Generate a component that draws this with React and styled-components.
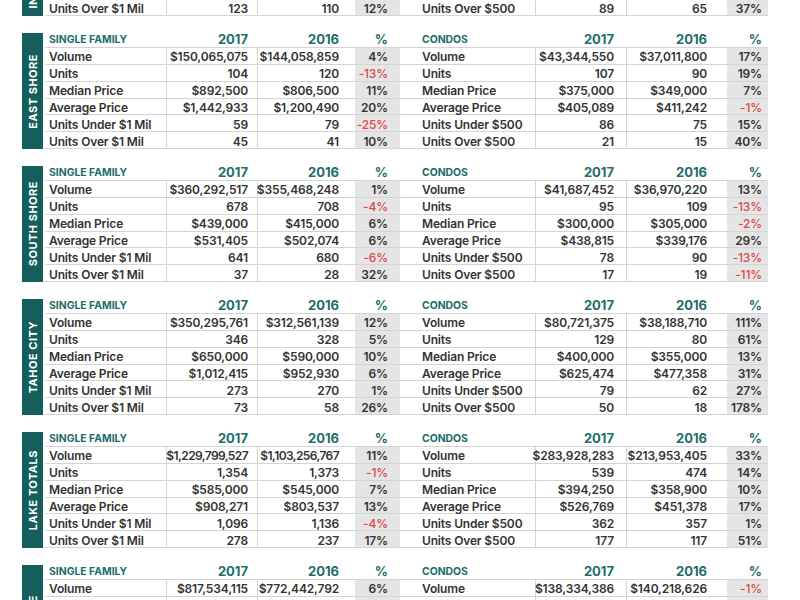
import React from "react";
import styled, { createGlobalStyle } from "styled-components";

const GlobalStyle = createGlobalStyle`
  html, body { margin: 0; padding: 0; background: #fff; }
  body { font-family: Inter, "Open Sans", "DejaVu Sans", sans-serif; color: #333; }
`;

const TEAL = "#145e5c";
const HEAD = "#1d6d69";
const RED = "#e0474c";
const LINE = "#d4d4d4";

const SF_LABELS = ["Volume", "Units", "Median Price", "Average Price", "Units Under $1 Mil", "Units Over $1 Mil"];
const CONDO_LABELS = ["Volume", "Units", "Median Price", "Average Price", "Units Under $500", "Units Over $500"];

const E = ["", "", ""];

const blocks = [
  {
    name: "INCLINE VILLAGE",
    sf: [E, E, E, E, E, ["123", "110", "12%"]],
    condo: [E, E, E, E, E, ["89", "65", "37%"]],
  },
  {
    name: "EAST SHORE",
    sf: [
      ["$150,065,075", "$144,058,859", "4%"],
      ["104", "120", "-13%"],
      ["$892,500", "$806,500", "11%"],
      ["$1,442,933", "$1,200,490", "20%"],
      ["59", "79", "-25%"],
      ["45", "41", "10%"],
    ],
    condo: [
      ["$43,344,550", "$37,011,800", "17%"],
      ["107", "90", "19%"],
      ["$375,000", "$349,000", "7%"],
      ["$405,089", "$411,242", "-1%"],
      ["86", "75", "15%"],
      ["21", "15", "40%"],
    ],
  },
  {
    name: "SOUTH SHORE",
    sf: [
      ["$360,292,517", "$355,468,248", "1%"],
      ["678", "708", "-4%"],
      ["$439,000", "$415,000", "6%"],
      ["$531,405", "$502,074", "6%"],
      ["641", "680", "-6%"],
      ["37", "28", "32%"],
    ],
    condo: [
      ["$41,687,452", "$36,970,220", "13%"],
      ["95", "109", "-13%"],
      ["$300,000", "$305,000", "-2%"],
      ["$438,815", "$339,176", "29%"],
      ["78", "90", "-13%"],
      ["17", "19", "-11%"],
    ],
  },
  {
    name: "TAHOE CITY",
    sf: [
      ["$350,295,761", "$312,561,139", "12%"],
      ["346", "328", "5%"],
      ["$650,000", "$590,000", "10%"],
      ["$1,012,415", "$952,930", "6%"],
      ["273", "270", "1%"],
      ["73", "58", "26%"],
    ],
    condo: [
      ["$80,721,375", "$38,188,710", "111%"],
      ["129", "80", "61%"],
      ["$400,000", "$355,000", "13%"],
      ["$625,474", "$477,358", "31%"],
      ["79", "62", "27%"],
      ["50", "18", "178%"],
    ],
  },
  {
    name: "LAKE TOTALS",
    sf: [
      ["$1,229,799,527", "$1,103,256,767", "11%"],
      ["1,354", "1,373", "-1%"],
      ["$585,000", "$545,000", "7%"],
      ["$908,271", "$803,537", "13%"],
      ["1,096", "1,136", "-4%"],
      ["278", "237", "17%"],
    ],
    condo: [
      ["$283,928,283", "$213,953,405", "33%"],
      ["539", "474", "14%"],
      ["$394,250", "$358,900", "10%"],
      ["$526,769", "$451,378", "17%"],
      ["362", "357", "1%"],
      ["177", "117", "51%"],
    ],
  },
  {
    name: "TRUCKEE",
    sf: [["$817,534,115", "$772,442,792", "6%"], E, E, E, E, E],
    condo: [["$138,334,386", "$140,218,626", "-1%"], E, E, E, E, E],
  },
];

const Page = styled.div`
  width: 800px;
  height: 600px;
  overflow: hidden;
  padding-left: 22px;
  box-sizing: border-box;
`;

const Stack = styled.div`
  display: flex;
  flex-direction: column;
  gap: 17px;
  margin-top: -100px;
`;

const Block = styled.section`
  display: flex;
  gap: 2px;
  height: 116px;
`;

const SideBar = styled.div`
  width: 21px;
  flex: none;
  background: ${TEAL};
  display: flex;
  align-items: center;
  justify-content: center;
  overflow: hidden;
`;

const SideLabel = styled.span`
  writing-mode: vertical-rl;
  transform: rotate(180deg);
  color: #fff;
  font-weight: 700;
  font-size: 11px;
  letter-spacing: 0.5px;
  white-space: nowrap;
`;

const Table = styled.div`
  display: grid;
  grid-template-columns: 121px 91px 98px 45px 135px 91px 101px 41px;
  grid-template-rows: 15px repeat(6, minmax(0, 1fr));
  height: 116px;
`;

const Cell = styled.div`
  display: flex;
  align-items: center;
  border-bottom: 1px solid ${LINE};
  box-sizing: border-box;
  white-space: nowrap;
  font-size: 12px;
  line-height: 13px;
  font-weight: 600;
  letter-spacing: -0.15px;
  padding-top: 2px;
`;

const LabelCell = styled(Cell)`
  padding-left: ${(p) => p.$indent}px;
`;

const NumCell = styled(Cell)`
  justify-content: flex-end;
  padding-right: ${(p) => p.$pad}px;
  border-left: 1px solid ${LINE};
  letter-spacing: ${(p) => (p.$tight ? "-0.6px" : "-0.15px")};
`;

const PctCell = styled(Cell)`
  justify-content: flex-end;
  padding-right: ${(p) => p.$pad}px;
  background: #e5e5e5;
  color: ${(p) => (p.$neg ? RED : "#333")};
  font-weight: ${(p) => (p.$neg ? 500 : 600)};
`;

const HeadCell = styled.div`
  display: flex;
  align-items: flex-end;
  border-bottom: 1px solid ${LINE};
  box-sizing: border-box;
  color: ${HEAD};
  font-weight: 700;
  white-space: nowrap;
  line-height: 1;
`;

const HeadLabel = styled(HeadCell)`
  font-size: 10.4px;
  padding-left: ${(p) => p.$indent}px;
  padding-bottom: 2px;
`;

const HeadNum = styled(HeadCell)`
  justify-content: flex-end;
  font-size: 13px;
  padding-right: ${(p) => p.$pad}px;
  padding-bottom: 1px;
`;

const sides = [
  { key: "sf", title: "SINGLE FAMILY", labels: SF_LABELS, indent: 4, pads: [9, 16, 12] },
  { key: "condo", title: "CONDOS", labels: CONDO_LABELS, indent: 22, pads: [12, 20, 6] },
];

function Section({ block }) {
  const cells = [];
  sides.forEach((s) => {
    cells.push(
      <HeadLabel key={s.key + "h0"} $indent={s.indent}>{s.title}</HeadLabel>,
      <HeadNum key={s.key + "h1"} $pad={s.pads[0]}>2017</HeadNum>,
      <HeadNum key={s.key + "h2"} $pad={s.pads[1]}>2016</HeadNum>,
      <HeadNum key={s.key + "h3"} $pad={s.pads[2]}>%</HeadNum>
    );
  });
  for (let r = 0; r < 6; r++) {
    sides.forEach((s) => {
      const [a, b, pct] = block[s.key][r];
      const tight = a.length > 13;
      cells.push(
        <LabelCell key={s.key + r + "l"} $indent={s.indent}>{s.labels[r]}</LabelCell>,
        <NumCell key={s.key + r + "a"} $pad={s.pads[0]} $tight={tight}>{a}</NumCell>,
        <NumCell key={s.key + r + "b"} $pad={s.pads[1]} $tight={tight}>{b}</NumCell>,
        <PctCell key={s.key + r + "p"} $pad={s.pads[2]} $neg={pct.startsWith("-")}>{pct}</PctCell>
      );
    });
  }
  return (
    <Block>
      <SideBar>
        <SideLabel>{block.name}</SideLabel>
      </SideBar>
      <Table>{cells}</Table>
    </Block>
  );
}

export default function App() {
  return (
    <>
      <GlobalStyle />
      <Page>
        <Stack>
          {blocks.map((b) => (
            <Section key={b.name} block={b} />
          ))}
        </Stack>
      </Page>
    </>
  );
}
